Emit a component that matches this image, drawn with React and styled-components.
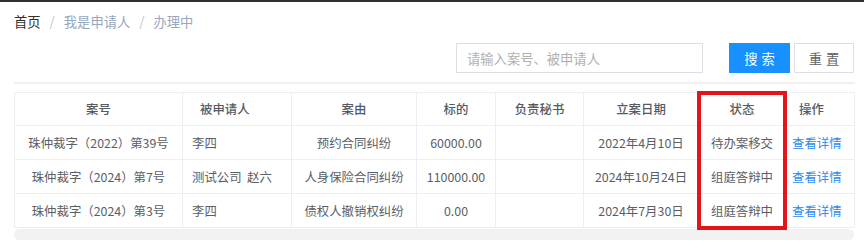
import React from 'react'
import styled, { createGlobalStyle } from 'styled-components'

const GlobalStyle = createGlobalStyle`
  body {
    margin: 0;
    background: #fff;
    font-family: "Noto Sans CJK SC", "Noto Sans", sans-serif;
  }
`

const TopLine = styled.div`
  height: 2px;
  background: #303133;
`

const Page = styled.div`
  padding: 0 9px 0 14px;
`

const Breadcrumb = styled.div`
  display: flex;
  align-items: center;
  height: 18px;
  padding-top: 11px;
  font-size: 13.3px;
  line-height: 18px;
`

const Crumb = styled.span`
  color: ${(p) => (p.$current ? '#303133' : '#97a8be')};
`

const Sep = styled.span`
  color: #c0c4cc;
  margin: 0 9px;
`

const Toolbar = styled.div`
  display: flex;
  justify-content: flex-end;
  align-items: center;
  margin-top: 12px;
  padding-right: 1px;
`

const SearchInput = styled.input`
  box-sizing: border-box;
  width: 247px;
  height: 30px;
  border: 1px solid #dcdfe6;
  padding: 0 10px;
  font-family: inherit;
  font-size: 13.3px;
  margin-right: 26px;
  outline: none;
  &::placeholder {
    color: #b0b0b0;
  }
`

const Button = styled.button`
  box-sizing: border-box;
  width: ${(p) => (p.$primary ? '61px' : '60px')};
  height: 30px;
  margin-left: ${(p) => (p.$primary ? '0' : '4px')};
  border: 1px solid ${(p) => (p.$primary ? '#1890ff' : '#dcdfe6')};
  background: ${(p) => (p.$primary ? '#1890ff' : '#fff')};
  color: ${(p) => (p.$primary ? '#fff' : '#606266')};
  font-family: inherit;
  font-size: 13.3px;
  letter-spacing: 4px;
  text-indent: 4px;
  padding: 0;
  cursor: pointer;
`

const Divider = styled.div`
  height: 2px;
  background: #f0f0f0;
  margin-top: 9px;
`

const TableWrap = styled.div`
  position: relative;
  margin-top: 8px;
  width: 840px;
`

const Table = styled.table`
  width: 840px;
  border-collapse: collapse;
  table-layout: fixed;
  font-size: 12.4px;
  border: 1px solid #ebeef5;
`

const Th = styled.th`
  height: 32px;
  padding: 0 ${(p) => p.$pad || '0'};
  border: 1px solid #ebeef5;
  text-align: ${(p) => p.$align || 'center'};
  color: #555a63;
  font-weight: 500;
`

const Td = styled.td`
  height: 33px;
  padding: 0 ${(p) => p.$pad || '0'};
  border: 1px solid #ebeef5;
  text-align: ${(p) => p.$align || 'center'};
  color: #5a5e66;
  white-space: pre;
`

const Link = styled.a`
  color: #2d8cf0;
  text-decoration: none;
  cursor: pointer;
`

const ScrollTrack = styled.div`
  height: 11px;
  margin-top: 1px;
  background: #f2f2f2;
  border-radius: 6px;
`

const Highlight = styled.div`
  position: absolute;
  left: 683px;
  top: -1px;
  width: 90px;
  height: 139px;
  box-sizing: border-box;
  border: 4px solid #e5141b;
  pointer-events: none;
`

const columns = [
  { title: '案号', width: 168 },
  { title: '被申请人', width: 109, align: 'left', pad: '17px' },
  { title: '案由', width: 125 },
  { title: '标的', width: 79 },
  { title: '负责秘书', width: 88 },
  { title: '立案日期', width: 115 },
  { title: '状态', width: 87 },
  { title: '操作', width: 69, align: 'left', pad: '13px' },
]

const rows = [
  { no: '珠仲裁字（2022）第39号', resp: '李四', cause: '预约合同纠纷', amount: '60000.00', date: '2022年4月10日', status: '待办案移交' },
  { no: '珠仲裁字（2024）第7号', resp: '测试公司  赵六', cause: '人身保险合同纠纷', amount: '110000.00', date: '2024年10月24日', status: '组庭答辩中' },
  { no: '珠仲裁字（2024）第3号', resp: '李四', cause: '债权人撤销权纠纷', amount: '0.00', date: '2024年7月30日', status: '组庭答辩中' },
]

export default function App() {
  return (
    <>
      <GlobalStyle />
      <TopLine />
      <Page>
        <Breadcrumb>
          <Crumb $current>首页</Crumb>
          <Sep>/</Sep>
          <Crumb>我是申请人</Crumb>
          <Sep>/</Sep>
          <Crumb>办理中</Crumb>
        </Breadcrumb>
        <Toolbar>
          <SearchInput placeholder="请输入案号、被申请人" />
          <Button $primary>搜索</Button>
          <Button>重置</Button>
        </Toolbar>
        <Divider />
        <TableWrap>
          <Table>
            <colgroup>
              {columns.map((c) => (
                <col key={c.title} style={{ width: c.width }} />
              ))}
            </colgroup>
            <thead>
              <tr>
                {columns.map((c) => (
                  <Th key={c.title} $align={c.align} $pad={c.pad}>{c.title}</Th>
                ))}
              </tr>
            </thead>
            <tbody>
              {rows.map((r) => (
                <tr key={r.no}>
                  <Td>{r.no}</Td>
                  <Td $align="left" $pad="9px">{r.resp}</Td>
                  <Td>{r.cause}</Td>
                  <Td>{r.amount}</Td>
                  <Td></Td>
                  <Td>{r.date}</Td>
                  <Td>{r.status}</Td>
                  <Td $align="left" $pad="6px"><Link>查看详情</Link></Td>
                </tr>
              ))}
            </tbody>
          </Table>
          <ScrollTrack />
          <Highlight />
        </TableWrap>
      </Page>
    </>
  )
}
